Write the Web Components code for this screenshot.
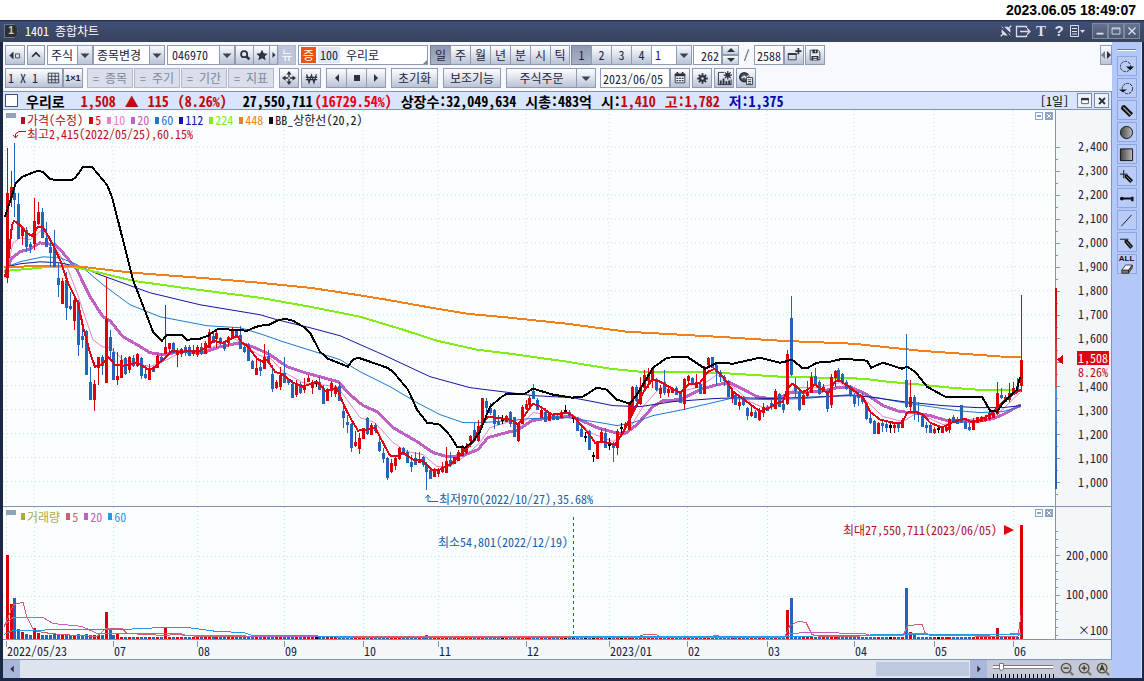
<!DOCTYPE html>
<html lang="ko">
<head>
<meta charset="utf-8">
<title>1401 종합차트</title>
<style>
html, body { margin: 0; min-height: 100%; background: #fff; }
body { font: 12px/14px "Noto Sans Mono CJK KR", "Liberation Mono", "Noto Sans CJK KR", monospace; color: #1c2340; }
</style>
</head>
<body>
<chart-app></chart-app>
<script>
const define = (name, markup, setup) => {
  const tpl = document.createElement('template');
  tpl.innerHTML = markup;
  customElements.define(name, class extends HTMLElement {
    constructor() { super(); this.attachShadow({ mode: 'open' }).append(tpl.content.cloneNode(true)); }
    connectedCallback() { if (setup) setup(this, this.shadowRoot); }
  });
};
const reset = `*{box-sizing:border-box}button,input,select{font:inherit;color:inherit;margin:0;padding:0;border-radius:0;outline:none}svg{display:block}`;

/* ---------- icons ---------- */
const ICONS = {
  collapse: '<path d="M1 8l4-4v8zM8 6h5v5H8z" fill="none" stroke="#2c3240"/><path d="M1 8l4-4v8z" fill="#2c3240"/>',
  up: '<path d="M3.500 10L8 5.500 12.500 10" fill="none" stroke="#2c3240" stroke-width="2"/>',
  down: '<path d="M2 6h12L8 12z" fill="#3a4150"/>',
  search: '<circle cx="7" cy="7" r="3.500" fill="none" stroke="#2c3240" stroke-width="2"/><path d="M9.500 9.500L13 13" stroke="#2c3240" stroke-width="3"/>',
  star: '<path d="M8 2l2 4 4.500.5-3.300 3 1 4.500L8 11.700 3.800 14l1-4.500-3.300-3L6 6z" fill="#2c3240"/>',
  right: '<path d="M6 4v8l4-4z" fill="#2c3240"/>',
  left: '<path d="M10 4v8L6 8z" fill="#2c3240"/>',
  stop: '<path d="M5 5h6v6H5z" fill="#2c3240"/>',
  grid: '<path d="M2.500 2.500h12v11h-12zM2.500 6h12M2.500 10h12M6.500 3v10M10.500 3v10" fill="none" stroke="#2c3240"/>',
  move: '<path d="M8 2v12M2 8h12" stroke="#2c3240" stroke-width="1.500"/><path d="M8 0l3 4H5zM8 16l3-4H5zM0 8l4-3v6zM16 8l-4-3v6z" fill="#2c3240"/><path d="M7 7h2v2H7z" fill="#dfe4ee"/>',
  won: '<path d="M2 3l3 10 3-9 3 9 3-10M1 6.500h14M1 9.500h14" fill="none" stroke="#2c3240" stroke-width="1.600"/>',
  addwin: '<path d="M1.500 6.500h9v7h-9z" fill="none" stroke="#2c3240"/><path d="M1 6h10v2H1zM12 0h2v7h-2zM9.500 2.500h7v2h-7z" fill="#2c3240"/>',
  save: '<path d="M2.500 2.500h9l2 2v9h-11z" fill="#e8ecf2" stroke="#2c3240"/><path d="M5 2h6v4H5zM4 9h8v5H4z" fill="#2c3240"/><path d="M6 11h4M6 13h4M8.500 3v2" stroke="#fff"/>',
  calendar: '<path d="M2.500 3.500h11v10h-11z" fill="#f4f6fa" stroke="#2c3240"/><path d="M2 3h12v3H2zM4 1h2v3H4zM10 1h2v3h-2z" fill="#2c3240"/><path d="M4 8.500h8M4 11h8" stroke="#2c3240" stroke-width="1.500" stroke-dasharray="2 1"/>',
  gear: '<circle cx="8" cy="8" r="4" fill="#2c3240"/><path d="M8 1.500v13M1.500 8h13M3.500 3.500l9 9M12.500 3.500l-9 9" stroke="#2c3240" stroke-width="2.200"/><circle cx="8" cy="8" r="1.500" fill="#dfe4ee"/>',
  chartgear: '<path d="M1.500 14.500v-13h6M1 14.500h14M15 9v6" fill="none" stroke="#2c3240"/><path d="M3 10h2v4H3zM6 8h2v6H6zM9 11h2v3H9zM12 10h2v4h-2z" fill="#2c3240"/><circle cx="11.500" cy="4.500" r="2.500" fill="#2c3240"/><path d="M11.500 0v9M7 4.500h9M8.500 1.500l6 6M14.500 1.500l-6 6" stroke="#2c3240" stroke-width="1.300"/>',
  coinpage: '<circle cx="6" cy="7" r="5" fill="#515866" stroke="#2c3240" stroke-width="2"/><path d="M3 8l3-2 2 2 3-3" fill="none" stroke="#fff" stroke-width="1.300"/><path d="M8.500 7.500h7v8h-7z" fill="#f4f6fa" stroke="#2c3240"/><path d="M10 10h4M10 12h4M10 14h4" stroke="#2c3240"/>',
  pin: '<path d="M2 14l4-4M10 6l4-4" stroke="#d9dfec" stroke-width="1.500"/><path d="M3 6l7 7H6l-3-3zM6 3h4l3 3v4z" fill="#d9dfec"/><path d="M3 3l2 2M11 11l2 2" stroke="#d9dfec"/>',
  dock: '<path d="M11.500 5V3.500h-10v10h10V12M5 8.500h9M12 5.500l3 3-3 3" fill="none" stroke="#d9dfec" stroke-width="1.300"/>',
  list: '<path d="M1.500 2.500h8v11h-8zM3 5.500h5M3 8.500h5M3 11h5" fill="none" stroke="#d9dfec"/><path d="M11 7h5l-2.500 3z" fill="#d9dfec"/>',
  min: '<path d="M4 10h8v2H4z" fill="#dde3ef"/>',
  max: '<path d="M3.500 4.500h9v7h-9zM3 5.500h10" fill="none" stroke="#dde3ef"/>',
  close: '<path d="M4 4l8 8M12 4l-8 8" stroke="#dde3ef" stroke-width="1.500"/>',
  restore: '<path d="M3.500 4.500h9v7h-9z" fill="#fff" stroke="#2c3240"/><path d="M3 4h10v3H3z" fill="#2c3240"/>',
  cross: '<path d="M4 4l8 8M12 4l-8 8" stroke="#2c3240" stroke-width="2.500"/>',
  redo: '<circle cx="7" cy="8" r="5.500" fill="none" stroke="#222" stroke-dasharray="3 1"/><path d="M7.500 8H16l-4 4z" fill="#111"/>',
  undo: '<circle cx="9" cy="8" r="5.500" fill="none" stroke="#222" stroke-dasharray="3 1"/><path d="M0 9h8.500L4 12z" fill="#111"/>',
  pencil: '<path d="M3 3l3-1 9 9-4 4-9-9z" fill="#111"/><path d="M4.500 4.500l8 8" stroke="#999" stroke-width="1.500"/>',
  disc: '<circle cx="8" cy="8" r="6.500" fill="url(#g)" stroke="#111"/>',
  square: '<path d="M1.500 2h13v12.500h-13z" fill="url(#g)" stroke="#111"/>',
  plusdraw: '<path d="M5 1v9M1 5.500h8" stroke="#111"/><path d="M6 6l3 0 6 6-3 3-6-6z" fill="#111"/><path d="M8 8l5 5" stroke="#999"/>',
  handle: '<path d="M3 8h11M14 6v5M14.500 6v5" stroke="#111" stroke-width="2"/><circle cx="3" cy="8" r="2" fill="#111"/>',
  line: '<path d="M2.500 14L13.500 2" stroke="#111"/>',
  linedraw: '<path d="M1 4.500h9" stroke="#111"/><path d="M6 5h3l6 7-3 3-6-7z" fill="#111"/><path d="M8 7l5 6" stroke="#999"/>',
  eraser: '<path d="M1 11l5-7h9l-5 7z" fill="#f5f5f5" stroke="#222"/><path d="M1 11h9v4H1zM10 11l5-7v4l-5 7z" fill="#777" stroke="#222"/>',
  zoomout: '<circle cx="7" cy="7" r="5.500" fill="#c5c3c0" stroke="#55504d" stroke-width="1.500"/><path d="M4 7h6" stroke="#333" stroke-width="1.500"/><path d="M11 11l4 4" stroke="#777" stroke-width="2.500"/>',
  zoomin: '<circle cx="7" cy="7" r="5.500" fill="#c5c3c0" stroke="#55504d" stroke-width="1.500"/><path d="M4 7h6M7 4v6" stroke="#333" stroke-width="1.500"/><path d="M11 11l4 4" stroke="#777" stroke-width="2.500"/>',
  zoomall: '<circle cx="7" cy="7" r="5.500" fill="#c5c3c0" stroke="#55504d" stroke-width="1.500"/><path d="M4.500 10L7 4l2.500 6M5.500 8h3" fill="none" stroke="#333" stroke-width="1.500"/><path d="M11 11l4 4" stroke="#777" stroke-width="2.500"/>'
};
define('ui-icon', `<style>${reset}:host{display:inline-block;width:var(--icon,16px);height:var(--icon,16px);flex:none}svg{width:100%;height:100%;overflow:visible}</style><svg viewBox="0 0 16 16" aria-hidden="true"></svg>`,
  (el, root) => { root.querySelector('svg').innerHTML = '<defs><linearGradient id="g"><stop stop-color="#444"/><stop offset="1" stop-color="#bbb"/></linearGradient></defs>' + ICONS[el.getAttribute('name')]; });

/* ---------- controls ---------- */
define('tb-button', `<style>${reset}
:host{display:block;flex:none;width:var(--w,20px);height:20px}
button{width:100%;height:100%;display:flex;align-items:center;justify-content:center;gap:3px;white-space:nowrap;border:1px solid #8f9bb3;background:linear-gradient(#fdfeff,#dde2ec 50%,#b9c3d6);line-height:16px}
:host([pressed]) button{background:linear-gradient(#8f99af,#aab3c6);border-color:#77829a}
:host([dim]) button{color:#7f879a;background:#d9deea;border-color:#b0b8ca}
:host([off]) button{color:#fff;background:#bcc5da;border-color:#b0b8ca}
:host([group]) button{border-right-width:0}
</style><button type="button"><slot></slot></button>`,
  (el, root) => { const l = el.getAttribute('label'); if (l) root.querySelector('button').setAttribute('aria-label', l); });

define('combo-box', `<style>${reset}
:host{display:block;flex:none;width:var(--w,60px);height:20px}
label{display:flex;height:100%;border:1px solid #8f9bb3;background:#fff;position:relative}
select,input{flex:1;min-width:0;width:100%;border:0;background:none;appearance:none;padding-left:var(--pad,3px)}
span{width:15px;display:grid;place-items:center;border-left:1px solid #8f9bb3;background:linear-gradient(#f6f8fb,#b9c3d6);position:absolute;right:0;top:0;bottom:0;pointer-events:none}
</style><label><span><ui-icon name="down" style="--icon:12px"></ui-icon></span></label>`,
  (el, root) => {
    const editable = el.hasAttribute('editable'), f = document.createElement(editable ? 'input' : 'select');
    if (editable) f.value = el.getAttribute('value'); else f.add(new Option(el.getAttribute('value')));
    f.setAttribute('aria-label', el.getAttribute('label'));
    root.querySelector('label').prepend(f);
  });

define('text-box', `<style>${reset}
:host{display:block;flex:none;width:var(--w,30px);height:20px}
input{width:100%;height:100%;border:1px solid #8f9bb3;background:#fff;text-align:var(--align,left);padding:0 2px}
</style><input type="text">`,
  (el, root) => { const f = root.querySelector('input'); f.value = el.getAttribute('value'); f.setAttribute('aria-label', el.getAttribute('label')); });

define('stock-name', `<style>${reset}
:host{display:flex;flex:none;width:130px;height:20px;border:1px solid #8f9bb3;background:#fff;align-items:center;padding:1px 2px;position:relative}
b{width:15px;height:16px;background:#f2500d;color:#fff;font-weight:400;text-align:center;line-height:16px}
i{font-style:normal;background:#dfe8fb;padding:0 2px;line-height:16px;margin:0 6px 0 2px}
:host::after{content:"";position:absolute;right:0;bottom:0;border:2px solid #7b8497;border-top-color:transparent;border-left-color:transparent}
</style><b>증</b><i>100</i><slot></slot>`);

define('spin-buttons', `<style>${reset}
:host{display:flex;flex-direction:column;flex:none;width:17px;height:20px}
button{flex:1;border:1px solid #8f9bb3;background:linear-gradient(#f6f8fb,#c5cddd);display:grid;place-items:center}
svg{width:8px;height:4px}
</style><button type="button" aria-label="증가"><svg viewBox="0 0 8 4"><path d="M4 0l4 4H0z" fill="#2c3240"/></svg></button><button type="button" aria-label="감소"><svg viewBox="0 0 8 4"><path d="M0 0h8L4 4z" fill="#2c3240"/></svg></button>`);

/* ---------- title bar ---------- */
define('title-bar', `<style>${reset}
:host{display:flex;align-items:center;height:22px;background:linear-gradient(#1e2740,#41507a 2px,#3c4866 12px,#38435c);color:#fff;padding:0 4px 0 4px}
.tab{width:14px;height:14px;background:#2b3038;border:1px solid #6f7888;color:#d8c9a8;font:bold 10px/12px "Liberation Sans",sans-serif;text-align:center;margin-right:7px;clip-path:polygon(0 0,75% 0,100% 50%,75% 100%,0 100%)}
h1{font:inherit;margin:0;flex:1}
.tools{display:flex;align-items:center;gap:2px;margin-right:7px}
.tools span{width:16px;text-align:center;color:#d9dfec;font:bold 15px/16px "Liberation Serif",serif}
.win{display:flex}
.win button{width:16px;height:16px;border:1px solid #7d89a5;background:linear-gradient(#66738f,#4a5670);display:grid;place-items:center}
</style><span class="tab">1</span><h1>1401 종합차트</h1>
<div class="tools"><ui-icon name="pin" style="--icon:14px"></ui-icon><ui-icon name="dock"></ui-icon><span>T</span><span style="font-family:'Liberation Sans'">?</span><ui-icon name="list"></ui-icon></div>
<div class="win"><button aria-label="최소화"><ui-icon name="min" style="--icon:14px"></ui-icon></button><button aria-label="최대화"><ui-icon name="max" style="--icon:14px"></ui-icon></button><button aria-label="닫기"><ui-icon name="close" style="--icon:14px"></ui-icon></button></div>`);

/* ---------- toolbar ---------- */
define('tool-bar', `<style>${reset}
:host{display:flex;flex-direction:column;gap:3px;background:#f8f9fe;padding:3px 0 3px 2px}
.row{display:flex;align-items:center;height:20px}
.g1{margin-right:1px}.g{margin-right:2px}.g4{margin-right:4px}.g5{margin-right:5px}
.end{margin-left:auto}
.slash{width:15px;text-align:center}
small{font:bold 9px/12px "Liberation Sans",sans-serif}
.size{display:flex;gap:8px;align-items:center}
</style>
<div class="row">
<tb-button class="g" label="접기"><ui-icon name="collapse" style="--icon:13px"></ui-icon></tb-button>
<tb-button class="g" style="--w:18px" label="위로"><ui-icon name="up" style="--icon:14px"></ui-icon></tb-button>
<combo-box style="--w:46px" value="주식" label="시장"></combo-box>
<combo-box style="--w:72px" class="g" value="종목변경" label="변경 대상"></combo-box>
<combo-box style="--w:68px;--pad:4px" editable value="046970" label="종목코드"></combo-box>
<tb-button style="--w:18px" group label="검색"><ui-icon name="search" style="--icon:14px"></ui-icon></tb-button>
<tb-button style="--w:16px" group label="관심종목"><ui-icon name="star" style="--icon:14px"></ui-icon></tb-button>
<tb-button style="--w:9px" label="펼치기"><ui-icon name="right" style="--icon:12px"></ui-icon></tb-button>
<tb-button class="g" style="--w:18px" label="뉴스" off>뉴</tb-button>
<stock-name class="g">우리로</stock-name>
<tb-button pressed group>일</tb-button><tb-button group>주</tb-button><tb-button group>월</tb-button><tb-button group>년</tb-button><tb-button group>분</tb-button><tb-button group>시</tb-button><tb-button class="g1">틱</tb-button>
<tb-button pressed group>1</tb-button><tb-button group>2</tb-button><tb-button group>3</tb-button><tb-button group>4</tb-button>
<combo-box class="g1" style="--w:41px" editable value="1" label="주기 값"></combo-box>
<text-box style="--w:29px;--align:right" value="262" label="표시 봉 수"></text-box><spin-buttons></spin-buttons>
<span class="slash">/</span>
<text-box style="--w:30px" value="2588" label="전체 봉 수"></text-box>
<tb-button class="g1" label="차트 추가"><ui-icon name="addwin" style="--icon:14px"></ui-icon></tb-button>
<tb-button label="저장"><ui-icon name="save" style="--icon:14px"></ui-icon></tb-button>
<tb-button class="end" style="--w:12px" label="도구 숨기기"><svg width="10" height="8" viewBox="0 0 10 8"><path d="M4 0v8L0 4z" fill="#777f90"/><path d="M6 0v8l4-4z" fill="#2c3240"/></svg></tb-button>
</div>
<div class="row">
<tb-button style="--w:58px" label="화면 분할"><span class="size">1 X 1 <ui-icon name="grid" style="--icon:14px"></ui-icon></span></tb-button>
<tb-button class="g4" label="1×1"><small>1×1</small></tb-button>
<tb-button class="g1" style="--w:46px" dim>= 종목</tb-button><tb-button class="g1" style="--w:46px" dim>= 주기</tb-button><tb-button class="g1" style="--w:46px" dim>= 기간</tb-button><tb-button class="g5" style="--w:46px" dim>= 지표</tb-button>
<tb-button class="g" label="이동"><ui-icon name="move" style="--icon:14px"></ui-icon></tb-button>
<tb-button class="g5" label="원화"><ui-icon name="won" style="--icon:13px"></ui-icon></tb-button>
<tb-button group label="이전"><ui-icon name="left"></ui-icon></tb-button><tb-button group label="정지"><ui-icon name="stop"></ui-icon></tb-button><tb-button class="g5" label="다음"><ui-icon name="right"></ui-icon></tb-button>
<tb-button class="g5" style="--w:47px">초기화</tb-button>
<tb-button class="g5" style="--w:58px">보조기능</tb-button>
<tb-button group style="--w:70px">주식주문</tb-button><tb-button class="g4" label="주문 종류"><ui-icon name="down" style="--icon:12px"></ui-icon></tb-button>
<text-box style="--w:70px" value="2023/06/05" label="기준일"></text-box>
<tb-button class="g" label="달력"><ui-icon name="calendar" style="--icon:14px"></ui-icon></tb-button>
<tb-button class="g" label="설정"><ui-icon name="gear" style="--icon:13px"></ui-icon></tb-button>
<tb-button class="g" label="차트 설정"><ui-icon name="chartgear" style="--icon:15px"></ui-icon></tb-button>
<tb-button label="종목 정보"><ui-icon name="coinpage" style="--icon:14px"></ui-icon></tb-button>
</div>`);

/* ---------- quote bar ---------- */
define('quote-bar', `<style>${reset}
:host{display:flex;align-items:center;height:19px;background:#d8e5fc;border:1px solid #8095b4;border-left:0;color:#000;font-size:14px;font-weight:700;line-height:16px;white-space:pre;padding:0 2px}
input{appearance:none;width:13px;height:13px;background:#fff;border:1px solid #44506c;margin-right:8px}
.r{color:#c00b12}.s{color:#ea0013}.b{color:#0808b0}
.end{margin-left:auto;font-weight:400;font-size:12px;margin-right:6px}
button{width:15px;height:15px;border:1px solid #7d89a5;background:#eef2fa;display:grid;place-items:center;margin-left:2px}
.m{margin-left:16px}.n{margin-left:9px}.t{margin-left:2px}
</style><input type="checkbox" aria-label="종목 선택"><span>우리로</span><span class="r m">1,508</span><span class="r n">▲</span><span class="r n">115</span><span class="r n">(8.26%)</span><span class="m">27,550,711</span><span class="s t">(16729.54%)</span><span class="n">상장수:32,049,634</span><span class="n">시총:483억</span><span class="n">시:</span><span class="r">1,410</span><span class="r n">고:</span><span class="r">1,782</span><span class="b n">저:</span><span class="b">1,375</span><span class="end">[1일]</span><button aria-label="복원"><ui-icon name="restore" style="--icon:12px"></ui-icon></button><button aria-label="닫기"><ui-icon name="cross" style="--icon:12px"></ui-icon></button>`);

/* ---------- legends ---------- */
define('chart-legend', `<style>${reset}
:host{display:flex;gap:6px;line-height:12px}
span{display:flex;align-items:center;color:var(--c);height:12px}
span::before{content:"";width:4px;height:7px;background:var(--c);margin-right:2px}
</style>`,
  (el, root) => { for (const part of el.getAttribute('items').split('|')) { const [t, c] = part.split('='); const s = document.createElement('span'); s.textContent = t; s.style.setProperty('--c', c); root.append(s); } });

define('pane-buttons', `<style>${reset}
:host{display:flex;gap:2px}
button{width:8px;height:8px;border:1px solid #8fa3c4;background:#fff;display:grid;place-items:center}
button+button{background:#8fa3c4}
i{width:4px;height:2px;background:#8fa3c4}
button+button svg{width:6px;height:6px}
</style><button aria-label="창 크기"><i></i></button><button aria-label="지표 닫기"><svg viewBox="0 0 6 6"><path d="M1 1l4 4M5 1L1 5" stroke="#fff"/></svg></button>`);

/* ---------- chart data: x high top bottom low direction ---------- */
const CANDLES = `7 148 193 277 283 r,11 171 187 197 207 r,14 143 193 199 217 b,18 193 204 238 239 b,22 226 227 235 245 r,26 227 230 246 252 b,30 242 244 246 253 b,34 198 221 243 250 r,38 202 212 223 225 r,42 208 212 237 238 b,46 222 238 246 247 b,50 242 247 252 267 b,54 230 248 266 267 b,58 263 278 284 297 b,62 278 281 303 304 r,66 272 280 307 320 b,70 292 306 308 310 b,74 298 300 320 330 r,78 300 302 344 356 b,82 321 336 339 348 b,86 330 331 374 375 b,90 367 382 399 399 b,94 380 384 399 411 r,98 357 357 367 385 r,102 355 357 365 375 b,106 277 319 382 383 r,110 330 337 350 360 b,113 348 352 379 380 b,117 352 376 379 385 r,121 355 360 377 378 r,125 357 358 373 375 b,129 356 357 369 373 r,133 355 358 365 367 b,137 353 354 365 367 r,141 357 358 375 379 b,145 365 374 377 379 b,149 364 368 379 379 r,153 366 367 371 372 b,157 354 356 367 368 r,161 353 357 361 363 b,165 305 347 353 354 r,169 343 343 348 353 r,173 342 343 352 353 b,177 348 351 354 367 r,181 348 349 353 357 r,185 345 347 352 356 b,189 345 347 355 356 b,193 345 350 353 356 r,197 345 347 354 357 r,201 343 347 353 355 b,205 341 343 353 354 r,209 329 332 347 348 r,213 332 336 342 343 b,216 330 333 338 348 r,220 337 338 343 345 b,224 341 343 348 351 b,228 336 337 342 347 r,232 327 329 337 338 r,236 329 331 335 338 b,240 326 335 348 349 b,244 345 347 351 353 b,248 343 344 360 361 b,252 360 361 368 369 b,256 360 368 374 375 r,260 362 367 370 376 b,264 344 357 368 368 r,268 350 356 362 363 b,272 365 374 388 392 b,276 380 382 387 389 r,280 367 375 386 390 r,284 357 373 382 382 b,288 378 380 382 385 b,292 380 384 397 397 b,296 380 383 394 397 r,300 382 384 392 394 b,304 378 385 389 393 r,308 375 378 381 382 r,312 380 382 387 394 r,316 380 382 383 387 k,319 377 382 389 390 b,323 385 388 403 404 b,327 388 390 400 401 r,331 381 383 390 397 r,335 385 387 393 397 r,339 382 386 400 401 b,343 403 411 417 428 b,347 415 422 424 433 b,351 423 424 447 452 b,355 431 442 445 447 r,359 433 438 448 454 r,363 428 428 438 439 r,367 417 418 433 435 b,371 423 425 434 435 r,375 423 425 430 433 b,379 438 442 450 452 b,383 448 453 458 463 b,387 457 458 477 480 b,391 459 463 471 473 r,395 457 458 465 470 r,399 447 448 458 460 r,403 447 448 454 455 b,407 450 452 462 463 b,411 455 462 466 472 b,415 452 458 464 465 b,419 452 460 462 463 r,423 456 457 464 467 b,426 462 465 471 490 b,430 468 470 478 479 b,434 468 470 476 477 r,438 468 469 473 477 r,442 462 467 471 473 r,446 447 461 472 473 r,450 452 460 464 467 b,454 457 457 463 464 r,458 450 452 460 461 r,462 445 447 455 456 r,466 443 446 452 454 r,470 435 436 440 447 r,474 423 430 440 442 b,478 420 426 440 442 r,482 398 398 423 424 r,486 398 401 407 415 b,490 403 408 412 415 b,494 409 410 423 429 b,498 415 422 424 425 b,502 415 419 420 424 k,506 415 416 421 422 r,510 411 412 423 427 b,514 417 417 436 437 b,518 422 423 440 442 r,522 405 407 423 424 r,526 400 404 408 410 r,529 396 398 404 408 r,533 384 391 398 399 b,537 398 400 409 410 b,541 407 410 417 418 r,545 408 412 421 422 b,549 412 413 420 421 r,553 413 414 419 420 b,557 415 416 419 420 b,561 410 412 417 418 r,565 405 410 411 413 k,569 410 412 415 417 b,573 415 417 418 423 k,577 417 418 430 431 b,581 426 429 436 437 b,585 432 436 437 442 k,589 430 431 449 450 b,593 452 455 456 462 k,597 442 443 458 458 r,601 429 432 440 442 r,605 428 433 447 447 b,609 438 444 445 450 k,613 442 443 447 462 b,617 429 431 447 455 r,621 423 427 428 435 k,625 422 424 427 429 r,629 402 404 429 430 r,632 386 387 413 415 r,636 385 387 400 402 b,640 377 387 403 405 r,644 370 375 387 391 r,648 368 374 380 388 r,652 368 369 380 388 r,656 378 379 389 391 b,660 385 388 393 398 r,664 370 382 392 395 b,668 387 389 392 397 r,672 387 388 392 393 r,676 386 388 394 395 b,680 392 393 402 402 b,684 378 379 403 410 r,688 375 376 380 385 r,692 377 378 383 385 b,696 374 383 387 387 r,700 382 384 393 393 b,704 366 368 393 394 r,708 357 358 364 368 r,712 357 357 367 368 b,716 363 365 371 386 b,720 370 372 376 382 b,724 375 377 380 386 b,728 380 381 396 397 b,732 388 391 397 403 r,735 393 395 404 405 b,739 396 402 405 410 r,743 396 397 404 406 b,747 407 408 415 420 b,751 406 412 415 417 r,755 410 412 417 417 b,759 408 410 419 421 r,763 403 407 412 417 r,767 405 407 410 411 b,771 400 403 406 410 b,775 389 391 408 408 r,779 393 394 406 407 b,783 402 404 409 413 b,787 350 354 403 405 r,791 296 318 374 376 b,795 378 387 390 397 b,799 388 392 409 411 b,803 390 395 404 405 r,807 381 392 395 397 r,811 372 377 392 392 r,815 368 376 383 385 b,819 380 382 393 395 b,823 384 387 391 392 r,827 390 392 408 412 b,831 374 377 404 408 r,835 370 371 377 387 r,838 368 370 380 381 b,842 373 374 382 384 b,846 380 382 388 390 b,850 385 387 395 397 b,854 393 395 403 407 b,858 392 395 397 406 b,862 393 398 401 404 b,866 402 403 418 420 b,870 410 418 422 424 b,874 420 421 433 433 b,878 422 423 433 434 r,882 420 423 425 432 b,886 422 424 427 432 b,890 422 425 427 433 k,894 422 425 427 433 r,898 423 424 427 432 b,902 418 420 427 428 r,906 334 380 406 408 b,910 380 397 406 413 r,914 395 397 411 420 b,918 402 412 414 422 b,922 413 416 426 427 b,926 422 425 427 433 b,930 422 425 432 433 b,934 427 429 432 434 r,938 425 428 429 433 k,942 426 428 432 433 r,946 425 427 430 432 r,949 418 419 429 433 r,953 415 417 422 423 b,957 417 419 423 424 b,961 405 405 422 422 b,965 420 422 428 429 b,969 423 427 429 431 b,973 418 420 429 430 r,977 417 417 422 423 r,981 416 417 421 422 r,985 415 417 420 421 r,989 412 413 418 420 r,993 412 413 417 418 r,997 382 393 413 415 r,1001 388 395 397 399 b,1005 395 397 401 402 r,1009 383 393 399 402 r,1013 382 388 392 395 r,1017 378 386 389 392 b,1021 295 360 385 392 r`.split(',').map(c => c.split(' '));
const COLORS = { r: '#dc0008', b: '#2464bc', k: '#000' };
const LINES = [
  ['#f080c0', 1, '5,278 13,243 20,238 30,240 42,230 55,247 67,267 77,293 85,317 93,340 102,347 110,348 123,360 150,367 167,360 180,353 207,350 233,338 260,356 270,358 283,372 303,383 337,387 347,400 360,418 375,423 393,443 407,452 423,455 437,467 450,467 467,455 480,443 490,428 510,422 518,428 533,413 550,415 573,416 590,433 613,442 627,433 643,407 660,388 680,392 700,387 717,375 733,387 750,402 763,408 778,405 787,395 797,388 817,388 840,383 867,402 883,417 903,422 917,413 943,425 970,420 997,415 1021,392'],
  ['#c060c4', 3, '5,273 12,258 20,252 30,249 40,243 55,245 63,253 77,270 90,297 103,317 110,321 123,337 137,345 150,353 163,355 180,352 203,353 220,347 240,343 255,348 270,355 287,367 305,373 327,379 338,382 350,395 363,406 377,412 393,428 417,442 433,453 447,457 463,456 478,450 488,438 510,432 517,431 532,421 550,418 573,417 597,428 615,433 625,434 637,425 653,407 663,401 680,400 700,390 717,385 730,383 740,388 757,397 770,399 780,398 790,393 820,392 837,388 850,387 867,395 883,406 900,412 913,413 930,416 947,421 977,422 993,419 1003,415 1021,405'],
  ['#1f78cc', 1, '7,267 20,262 43,257 60,258 73,263 83,268 103,285 130,305 160,317 207,326 240,328 260,334 283,342 340,360 360,372 390,387 417,403 440,415 463,423 483,423 510,421 530,419 567,418 600,423 617,426 633,423 653,416 683,410 730,399 770,400 803,399 850,395 877,398 903,403 930,407 957,411 980,413 1003,412 1021,407'],
  ['#1414a0', 1, '7,267 20,264 40,262 60,263 83,268 100,275 150,293 200,305 260,315 277,320 310,328 340,336 383,355 430,377 470,388 510,393 533,396 572,398 593,402 613,406 640,407 673,402 713,399 740,398 770,399 850,396 867,397 903,402 943,406 977,408 1003,408 1021,406'],
  ['#80ee14', 2, '4,272 7,271 50,267 73,267 100,273 133,281 183,288 260,298 310,307 360,317 400,329 437,341 477,350 510,354 567,362 610,369 640,372 717,373 780,377 863,379 887,382 910,384 950,388 977,390 1021,391'],
  ['#f08018', 2, '4,267 73,266 133,273 200,278 260,283 310,288 350,294 387,300 437,309 467,314 510,318 567,324 627,332 717,337 780,341 853,344 920,351 1003,357 1021,357'],
  ['#e00010', 2, '5,277 8,263 12,225 14,221 20,225 27,233 32,236 38,227 43,227 53,245 60,260 68,283 78,303 83,327 90,353 95,367 102,365 108,357 115,365 123,366 137,363 147,369 153,369 163,360 172,351 180,352 200,351 207,347 213,341 223,343 237,336 242,343 248,347 257,359 263,362 267,360 275,372 283,375 293,383 303,387 317,382 325,391 337,389 345,408 353,423 358,431 367,430 375,428 383,443 390,456 397,457 403,453 413,460 422,461 432,470 438,471 450,465 463,453 473,442 480,428 488,417 495,418 510,420 518,425 525,415 533,404 540,407 552,415 567,413 573,416 587,432 595,443 603,442 615,445 623,433 633,413 643,393 652,380 660,382 667,386 680,393 688,385 700,383 708,372 715,369 727,382 733,392 747,402 760,412 770,408 778,403 783,402 787,390 792,384 798,388 803,393 815,385 828,394 835,382 840,381 850,388 863,398 870,412 880,420 893,423 902,424 907,413 915,412 923,415 930,423 942,428 952,423 965,419 972,423 983,419 993,413 1003,402 1013,395 1021,390'],
  ['#000', 2, '5,217 13,192 16,183 22,177 32,173 38,171 43,172 50,179 55,180 72,180 76,177 83,167 92,167 107,185 112,197 133,280 153,332 162,341 167,335 182,335 187,340 200,339 208,336 218,329 247,331 254,328 260,326 269,325 277,321 285,319 293,321 305,328 310,333 320,352 328,359 348,367 353,360 358,358 367,361 387,368 393,372 408,390 417,410 427,423 440,425 450,436 457,447 465,448 473,442 480,432 490,407 502,397 507,394 525,394 533,389 553,395 572,398 583,397 597,388 607,390 617,400 630,404 637,395 653,368 667,358 687,357 705,369 717,363 733,364 760,358 780,363 785,362 792,360 802,368 808,368 817,363 830,362 843,359 867,361 871,368 883,363 902,369 907,367 915,372 927,387 945,397 982,397 990,411 997,412 1003,403 1017,390 1020,377']
];
const MONTHS = [6, 34, 113, 197, 284, 363, 438, 526, 609, 687, 767, 854, 934, 1013];
const grid = (x0, x1, y0, y1, rows) => `<g stroke="#d3d9e4" stroke-dasharray="1 3" fill="none">${MONTHS.map(x => `<path d="M${x} ${y0}V${y1}"/>`).join('')}${rows.map(y => `<path d="M${x0} ${y}H${x1}"/>`).join('')}</g>`;

const paneCss = `${reset}
:host{display:grid;grid-template-columns:minmax(0,1052fr) minmax(0,57fr);border-bottom:1px solid #8095b4;min-height:0}
.plot{position:relative;background:#fbfeff;min-width:0;min-height:0}
.plot>svg,.scale>svg{position:absolute;inset:0;width:100%;height:100%}
.fold{position:absolute;left:3px;top:3px;width:10px;height:5px;border:0;background:#8fa3bd}
chart-legend{position:absolute;left:18px;top:4px}
pane-buttons{position:absolute;right:2px;top:2px}
.note{position:absolute;white-space:nowrap;display:flex;align-items:center;line-height:12px;height:12px}
.scale{position:relative;background:#f4f7f9;border-right:1px solid #8095b4;text-align:right;min-height:0}`;

define('price-chart', `<style>${paneCss}
.hi{left:9px;top:18px;color:#c00b20}
.lo{left:421px;bottom:1px;color:#2060a8}
.note svg{margin-right:1px}
.labels{position:absolute;left:0;right:3px;top:6%;bottom:3%;display:grid;grid-auto-rows:1fr;align-items:center}
.now{position:absolute;right:3px;top:61%;color:#c00b20;line-height:14px;display:grid}
.now b{font-weight:400;background:#e00010;color:#fff;padding:0 1px;margin-right:-1px}
chart-legend{top:4px}
</style>
<div class="plot"><svg viewBox="3 110 1052 396" preserveAspectRatio="none" shape-rendering="crispEdges"></svg>
<button class="fold" aria-label="접기"></button>
<chart-legend items="가격(수정)=#b01020|5=#dc0008|10=#f080c0|20=#c060c4|60=#1f78cc|112=#1414a0|224=#80ee14|448=#f08018|BB_상한선(20,2)=#111"></chart-legend>
<div class="note hi"><svg width="14" height="10" viewBox="0 0 14 10"><path d="M14 2.500H7L3.500 5v4M1 6l2.500 3L6 6" fill="none" stroke="#c00b20"/></svg>최고2,415(2022/05/25),60.15%</div>
<div class="note lo"><svg width="14" height="10" viewBox="0 0 14 10"><path d="M14 7.500H4V1M1.500 4L4 1l2.500 3" fill="none" stroke="#2060a8"/></svg>최저970(2022/10/27),35.68%</div>
<pane-buttons></pane-buttons></div>
<div class="scale"><svg viewBox="0 110 56 396" preserveAspectRatio="none" shape-rendering="crispEdges"></svg><div class="labels"></div><div class="now"><b>1,508</b><span>8.26%</span></div></div>`,
  (el, root) => {
    const step = 335 / 14, rows = [...Array(15)].map((_, i) => Math.round(147 + i * step));
    const [plot, scale] = root.querySelectorAll('.plot>svg,.scale>svg');
    plot.innerHTML = grid(3, 1055, 110, 506, rows)
      + LINES.slice(0, 6).map(([c, w, p]) => `<polyline points="${p}" fill="none" stroke="${c}" stroke-width="${w}"/>`).join('')
      + CANDLES.map(([x, h, t, b, l, c]) => `<path fill="${COLORS[c]}" d="M${x} ${h}h1V${l}h-1zM${x - 1} ${t}h3V${+b + 1}h-3z"/>`).join('')
      + LINES.slice(6).map(([c, w, p]) => `<polyline points="${p}" fill="none" stroke="${c}" stroke-width="${w}"/>`).join('');
    scale.innerHTML = `<defs><linearGradient id="r" x2="0" y2="1"><stop stop-color="#d00008"/><stop offset=".5" stop-color="#e85050"/><stop offset=".5" stop-color="#5090dc"/><stop offset="1" stop-color="#2060b8"/></linearGradient></defs><path d="M0 110h1v396H0z" fill="#8095b4"/>`
      + rows.map(y => `<path d="M1 ${y}h4v1H1zM1 ${y + 12}h2v1H1z" fill="#8095b4"/>`).join('')
      + '<path d="M0 288h2v201H0z" fill="url(#r)"/><path d="M2 360l6-5v10z" fill="#d00010"/>';
    root.querySelector('.labels').innerHTML = rows.map((_, i) => `<span>${i === 9 ? '' : (2400 - i * 100).toLocaleString('en-US')}</span>`).join('');
  });

const BIG = { 7: 555, 11: 604, 14: 598, 18: 629, 22: 632, 26: 634, 30: 635, 34: 628, 38: 633, 42: 635, 54: 634, 66: 634, 78: 634, 86: 634, 106: 612, 110: 628, 113: 635, 117: 634, 165: 627, 426: 635, 787: 610, 791: 598, 906: 588, 910: 632, 914: 635, 997: 628, 1021: 525 };
define('volume-chart', `<style>${paneCss}
.min{right:487px;top:29px;color:#2060a8}
.max{right:41px;top:17px;color:#b01020}
.max svg{margin-left:7px}
.scale span{position:absolute;right:3px}
</style>
<div class="plot"><svg viewBox="3 507 1052 132" preserveAspectRatio="none" shape-rendering="crispEdges"></svg>
<button class="fold" aria-label="접기"></button>
<chart-legend items="거래량=#b0a848|5=#d06070|20=#c060c4|60=#2498e8"></chart-legend>
<div class="note min">최소54,801(2022/12/19)</div>
<div class="note max">최대27,550,711(2023/06/05)<svg width="10" height="10" viewBox="0 0 10 10"><path d="M0 0l10 5-10 5z" fill="#e00010"/></svg></div>
<pane-buttons></pane-buttons></div>
<div class="scale"><svg viewBox="0 507 56 132" preserveAspectRatio="none" shape-rendering="crispEdges"></svg><span style="top:31%">200,000</span><span style="top:61%">100,000</span><span style="top:88%">×100</span></div>`,
  (el, root) => {
    const [plot, scale] = root.querySelectorAll('.plot>svg,.scale>svg');
    const line = (c, p) => `<polyline points="${p}" fill="none" stroke="${c}"/>`;
    plot.innerHTML = grid(3, 1055, 507, 639, [556, 596])
      + CANDLES.map(([x, , , , , c]) => { const y = BIG[x] || (x < 110 ? 635 : 637); return `<path fill="${COLORS[c]}" d="M${x - 1} ${y}h3V639h-3z"/>`; }).join('')
      + line('#d06070', '4,627 11,610 14,604 23,602 27,617 34,630 43,632 60,634 97,636 106,628 122,628 127,633 165,635 175,634 200,636 638,636 645,634 656,634 660,636 710,636 716,635 722,636 785,636 790,625 798,621 806,622 812,634 820,636 903,635 908,625 922,624 925,632 930,635 1018,636 1021,615')
      + line('#c060c4', '4,625 13,617 43,617 53,623 82,626 97,633 180,633 187,635 300,636 370,637 784,637 790,633 810,632 865,633 870,635 903,635 908,633 980,635 1021,633')
      + line('#2498e8', '4,634 13,630 43,630 47,629 123,629 163,627 187,627 217,631 243,632 253,635 300,635 370,637 785,636 900,634 1021,634')
      + '<path d="M573.500 517V639" stroke="#2060a8" stroke-dasharray="3 3"/>';
    scale.innerHTML = '<path d="M0 507h1v132H0z" fill="#8095b4"/>' + [...Array(14)].map((_, i) => `<path d="M1 ${531 + i * 8}h${i === 3 || i === 8 ? 4 : 2}v1H1z" fill="#8095b4"/>`).join('');
  });

define('time-axis', `<style>${reset}
:host{display:grid;grid-template-columns:3fr 107fr 84fr 87fr 79fr 75fr 88fr 83fr 78fr 80fr 87fr 80fr 79fr 98fr;height:20px;background:#f4f7f9;border-bottom:1px solid #8095b4;border-right:1px solid #8095b4}
span{min-width:0;white-space:nowrap;background:linear-gradient(#8095b4,#8095b4) 0 1px/1px 6px no-repeat;padding:4px 0 0 1px;line-height:14px}
</style><i></i>` + ['2022/05/23', '07', '08', '09', '10', '11', '12', '2023/01', '02', '03', '04', '05', '06'].map(t => `<span>${t}</span>`).join(''));

define('scroll-strip', `<style>${reset}
:host{display:flex;height:18px;background:#dfe3ed}
button{border:0;width:17px;background:#a9b7da;display:grid;place-items:center;flex:none}
.track{flex:1;display:flex;justify-content:flex-end;padding:2px 1px}
.thumb{width:93px;background:#bdc9e0}
.zoom{display:flex;background:#c3c9d8;padding-left:4px}
label{display:flex;flex-direction:column;justify-content:space-between;width:64px;padding:2px 0 0 2px}
input{appearance:none;width:60px;height:9px;background:linear-gradient(#777,#777) 0 3px/100% 1px no-repeat,linear-gradient(#fff,#fff) 0 4px/100% 2px no-repeat,linear-gradient(#888,#888) 0 6px/100% 1px no-repeat}
input::-webkit-slider-thumb{appearance:none;width:5px;height:8px;background:#fff;border:1px solid #777;border-radius:0 0 3px 3px}
i{height:4px;width:61px;background:repeating-linear-gradient(90deg,#111 0 1px,transparent 1px 4px)}
.zoom button{width:18px;background:none}
.pad{width:3px}
</style><button aria-label="왼쪽"><ui-icon name="left" style="--icon:14px"></ui-icon></button><div class="track"><div class="thumb"></div></div><button aria-label="오른쪽"><ui-icon name="right" style="--icon:14px"></ui-icon></button>
<div class="zoom"><label><input type="range" min="0" max="100" value="10" aria-label="확대 비율"><i></i></label><span class="pad"></span><button aria-label="축소"><ui-icon name="zoomout" style="--icon:14px"></ui-icon></button><button aria-label="확대"><ui-icon name="zoomin" style="--icon:14px"></ui-icon></button><button aria-label="전체"><ui-icon name="zoomall" style="--icon:14px"></ui-icon></button></div>`);

define('draw-palette', `<style>${reset}
:host{display:flex;flex-direction:column;align-items:center;gap:2px;width:30px;background:#b4c8f8;padding-top:7px;border-right:1px solid #d4e0ff}
hr{width:19px;height:2px;border:0;margin:0 0 3px;background:linear-gradient(#6678a0 50%,#fff 50%)}
button{width:20px;height:20px;border:1px solid #8ea6dc;background:#b9cbf8;display:grid;place-items:center}
small{font:bold 8px/7px "Liberation Sans",sans-serif;color:#111}
</style><hr>` + [['redo', '다시 실행'], ['undo', '실행 취소'], ['pencil', '연필'], ['disc', '원'], ['square', '사각형'], ['plusdraw', '십자선'], ['handle', '수평선'], ['line', '추세선'], ['linedraw', '선 편집']].map(([n, l]) => `<button aria-label="${l}"><ui-icon name="${n}" style="--icon:15px"></ui-icon></button>`).join('') + `<button aria-label="모두 지우기"><small>ALL</small><ui-icon name="eraser" style="--icon:12px"></ui-icon></button>`);

define('chart-app', `<style>${reset}
:host{display:flex;flex-direction:column;min-height:100vh}
time{height:20px;flex:none;text-align:right;padding-right:8px;font:bold 14px/20px "Liberation Sans",sans-serif;color:#000}
main{flex:1;display:flex;flex-direction:column;background:#1c2744;padding-bottom:3px}
.body{flex:1;display:flex;padding:0 2px 0 3px;min-height:0}
.work{flex:1;min-width:0;display:flex;flex-direction:column;background:#fff}
price-chart{flex:397 1 0}volume-chart{flex:133 1 0}
</style><time datetime="2023-06-05T18:49:07">2023.06.05 18:49:07</time>
<main><title-bar></title-bar><div class="body"><div class="work"><tool-bar></tool-bar><quote-bar></quote-bar><price-chart></price-chart><volume-chart></volume-chart><time-axis></time-axis><scroll-strip></scroll-strip></div><draw-palette></draw-palette></div></main>`);
</script>
</body>
</html>
